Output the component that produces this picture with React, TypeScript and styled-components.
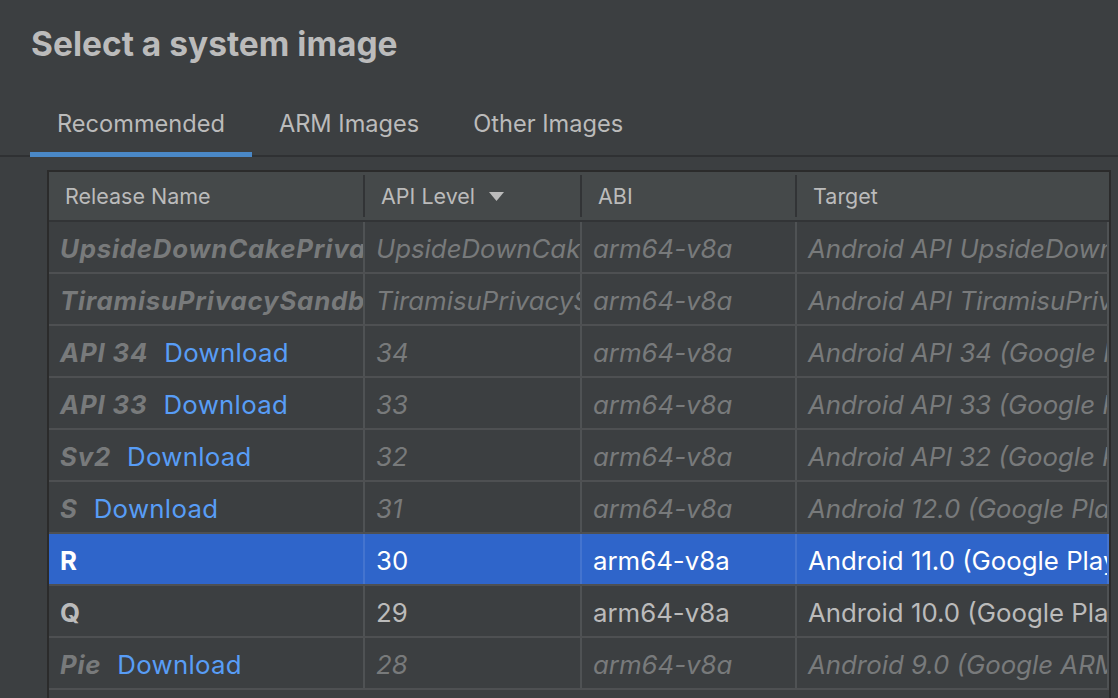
import React from 'react';
import styled, { createGlobalStyle, css } from 'styled-components';

const Global = createGlobalStyle`
  html, body { margin: 0; padding: 0; background: #3c3f41; overflow: hidden; }
  body { font-family: Inter, "Noto Sans", sans-serif; -webkit-font-smoothing: antialiased; }
`;

const Page = styled.div`
  width: 1118px;
  height: 698px;
  overflow: hidden;
  background: #3c3f41;
  display: flex;
  flex-direction: column;
`;

const Title = styled.h1`
  margin: 0;
  padding: 26px 0 0 31px;
  font-size: 33.5px;
  line-height: 36px;
  font-weight: 700;
  color: #bbbbbb;
`;

const TabBar = styled.div`
  display: flex;
  margin-top: 37px;
  padding-left: 30px;
  border-bottom: 2px solid #2f3133;
`;

const Tab = styled.div<{ $active?: boolean }>`
  position: relative;
  height: 56px;
  box-sizing: border-box;
  display: flex;
  align-items: center;
  padding: 0 27px 7px;
  font-size: 23.6px;
  color: #bbbbbb;
  ${(p) =>
    p.$active &&
    css`
      &::after {
        content: '';
        position: absolute;
        left: 0;
        right: 0;
        bottom: -2px;
        height: 5px;
        background: #4a88c7;
      }
    `}
`;

const Table = styled.div`
  margin: 13px 0 0 47px;
  width: 1064px;
  flex: 1;
  border: 2px solid #2b2b2b;
  border-bottom: none;
  box-sizing: border-box;
  overflow: hidden;
`;

const cols = '316px 217px 215px 312px';

const HeaderRow = styled.div`
  display: grid;
  grid-template-columns: ${cols};
  height: 48px;
  background: #45494a;
  border-bottom: 2px solid #323436;
`;

const HeaderCell = styled.div<{ $last?: boolean }>`
  display: flex;
  align-items: center;
  gap: 14px;
  padding-left: 16px;
  font-size: 21.5px;
  color: #bbbbbb;
  border-right: ${(p) => (p.$last ? 'none' : '2px solid #323436')};
  margin: 3px 0;
`;

const Row = styled.div<{ $selected?: boolean }>`
  display: grid;
  grid-template-columns: ${cols};
  height: 50px;
  border-bottom: 2px solid #4e5052;
  background: ${(p) => (p.$selected ? '#2f65ca' : 'transparent')};
`;

type Tone = 'dim' | 'normal' | 'selected';

const toneColor = (t: Tone) => (t === 'selected' ? '#ffffff' : t === 'normal' ? '#bbbbbb' : '#787a7b');

const Cell = styled.div<{ $tone: Tone }>`
  display: flex;
  align-items: center;
  gap: 16px;
  padding: 2px 0 0 11px;
  overflow: hidden;
  white-space: nowrap;
  font-size: 25.8px;
  color: ${(p) => toneColor(p.$tone)};
  font-style: ${(p) => (p.$tone === 'dim' ? 'italic' : 'normal')};
  border-right: 2px solid rgba(255, 255, 255, 0.1);
`;

const Name = styled.span`
  font-weight: 700;
  letter-spacing: 0.8px;
`;

const Download = styled.span`
  color: #589df6;
  font-style: normal;
  font-weight: 400;
  letter-spacing: 0.3px;
`;

const SortArrow = () => (
  <svg width="15" height="9" viewBox="0 0 15 9">
    <path d="M0 0 L15 0 L7.5 9 Z" fill="#bbbbbb" />
  </svg>
);

type Item = {
  name: string;
  download?: boolean;
  api: string;
  target: string;
  tone: Tone;
};

const items: Item[] = [
  { name: 'UpsideDownCakePrivacySandbox', api: 'UpsideDownCakePrivacySandbox', target: 'Android API UpsideDownCakePrivacySandbox (Google Play)', tone: 'dim' },
  { name: 'TiramisuPrivacySandbox', api: 'TiramisuPrivacySandbox', target: 'Android API TiramisuPrivacySandbox (Google Play)', tone: 'dim' },
  { name: 'API 34', download: true, api: '34', target: 'Android API 34 (Google Play)', tone: 'dim' },
  { name: 'API 33', download: true, api: '33', target: 'Android API 33 (Google Play)', tone: 'dim' },
  { name: 'Sv2', download: true, api: '32', target: 'Android API 32 (Google Play)', tone: 'dim' },
  { name: 'S', download: true, api: '31', target: 'Android 12.0 (Google Play)', tone: 'dim' },
  { name: 'R', api: '30', target: 'Android 11.0 (Google Play)', tone: 'selected' },
  { name: 'Q', api: '29', target: 'Android 10.0 (Google Play)', tone: 'normal' },
  { name: 'Pie', download: true, api: '28', target: 'Android 9.0 (Google ARM64)', tone: 'dim' },
];

export default function App() {
  return (
    <Page>
      <Global />
      <Title>Select a system image</Title>
      <TabBar>
        <Tab $active>Recommended</Tab>
        <Tab>ARM Images</Tab>
        <Tab>Other Images</Tab>
      </TabBar>
      <Table>
        <HeaderRow>
          <HeaderCell>Release Name</HeaderCell>
          <HeaderCell>
            API Level <SortArrow />
          </HeaderCell>
          <HeaderCell>ABI</HeaderCell>
          <HeaderCell $last>Target</HeaderCell>
        </HeaderRow>
        {items.map((it) => (
          <Row key={it.name} $selected={it.tone === 'selected'}>
            <Cell $tone={it.tone}>
              <Name>{it.name}</Name>
              {it.download && <Download>Download</Download>}
            </Cell>
            <Cell $tone={it.tone}>{it.api}</Cell>
            <Cell $tone={it.tone}>arm64-v8a</Cell>
            <Cell $tone={it.tone}>{it.target}</Cell>
          </Row>
        ))}
      </Table>
    </Page>
  );
}
